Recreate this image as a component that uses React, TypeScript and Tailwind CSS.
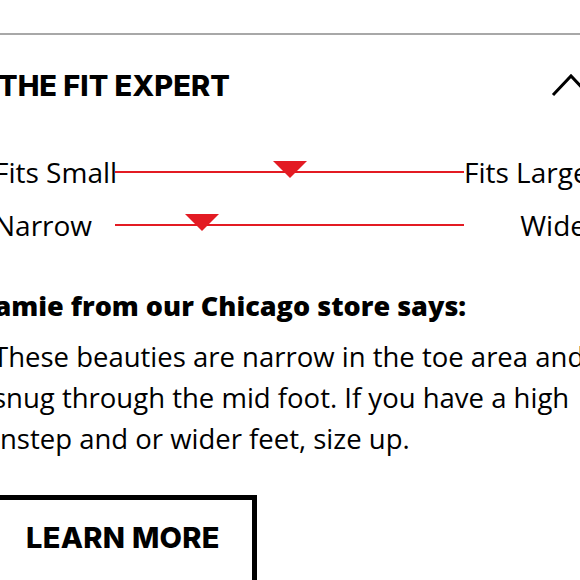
const body = { fontFamily: '"Open Sans", "Noto Sans", sans-serif' };
const heavy = { fontFamily: 'Inter, "Liberation Sans", sans-serif' };

function FitRow({ left, right, at }: { left: string; right: string; at: number }) {
  return (
    <div className="flex items-center h-[40px]">
      <div className="w-[121px] shrink-0 whitespace-nowrap text-[28px] text-black">{left}</div>
      <div className="relative w-[349px] shrink-0 h-[2px] bg-[#e31b23]">
        {/* marker */}
        <svg
          className="absolute top-[-10px]"
          style={{ left: at }}
          width="34"
          height="18"
          viewBox="0 0 34 18"
        >
          <polygon points="0,0 34,0 17,17" fill="#e31b23" />
        </svg>
      </div>
      <div className="flex-1 whitespace-nowrap text-right text-[28px] text-black">{right}</div>
    </div>
  );
}

export default function App() {
  return (
    <div className="w-[580px] h-[580px] overflow-hidden bg-white">
      <div className="h-[33px]" />
      <div className="h-[2px] bg-[#a8a8a8]" />
      <div className="w-[592px] -ml-[6px]" style={body}>
        <div className="flex items-center justify-between pt-[29px] pb-[30px]">
          <h2 className="text-[29px] font-extrabold text-black pl-[4px]" style={heavy}>
            THE FIT EXPERT
          </h2>
          <svg width="40" height="26" viewBox="0 0 40 26" className="-mr-[4px]">
            <polyline points="3,22 21,3 39,22" fill="none" stroke="#000" strokeWidth="3" />
          </svg>
        </div>

        <div className="pt-[14px]">
          <FitRow left="Fits Small" right="Fits Large" at={158} />
          <div className="h-[13px]" />
          <FitRow left="Narrow" right="Wide" at={70} />
        </div>

        <div className="pt-[41px]">
          <p className="text-[27px] font-extrabold text-black -ml-[9px] whitespace-nowrap">Jamie from our Chicago store says:</p>
          <p className="mt-[10px] text-[27.5px] leading-[41px] text-black w-[640px] -ml-[1px]">
            These beauties are narrow in the toe area and snug through the mid foot. If you have a high instep and or wider feet, size up.
          </p>
        </div>

        <div className="pt-[36px]">
          <button
            className="-ml-[20px] w-[283px] h-[90px] border-[5px] border-black pl-[47px] text-left text-[29px] font-extrabold tracking-[0.3px] text-black"
            style={heavy}
          >
            <span className="block -mt-[4px]">LEARN MORE</span>
          </button>
        </div>
      </div>
    </div>
  );
}
